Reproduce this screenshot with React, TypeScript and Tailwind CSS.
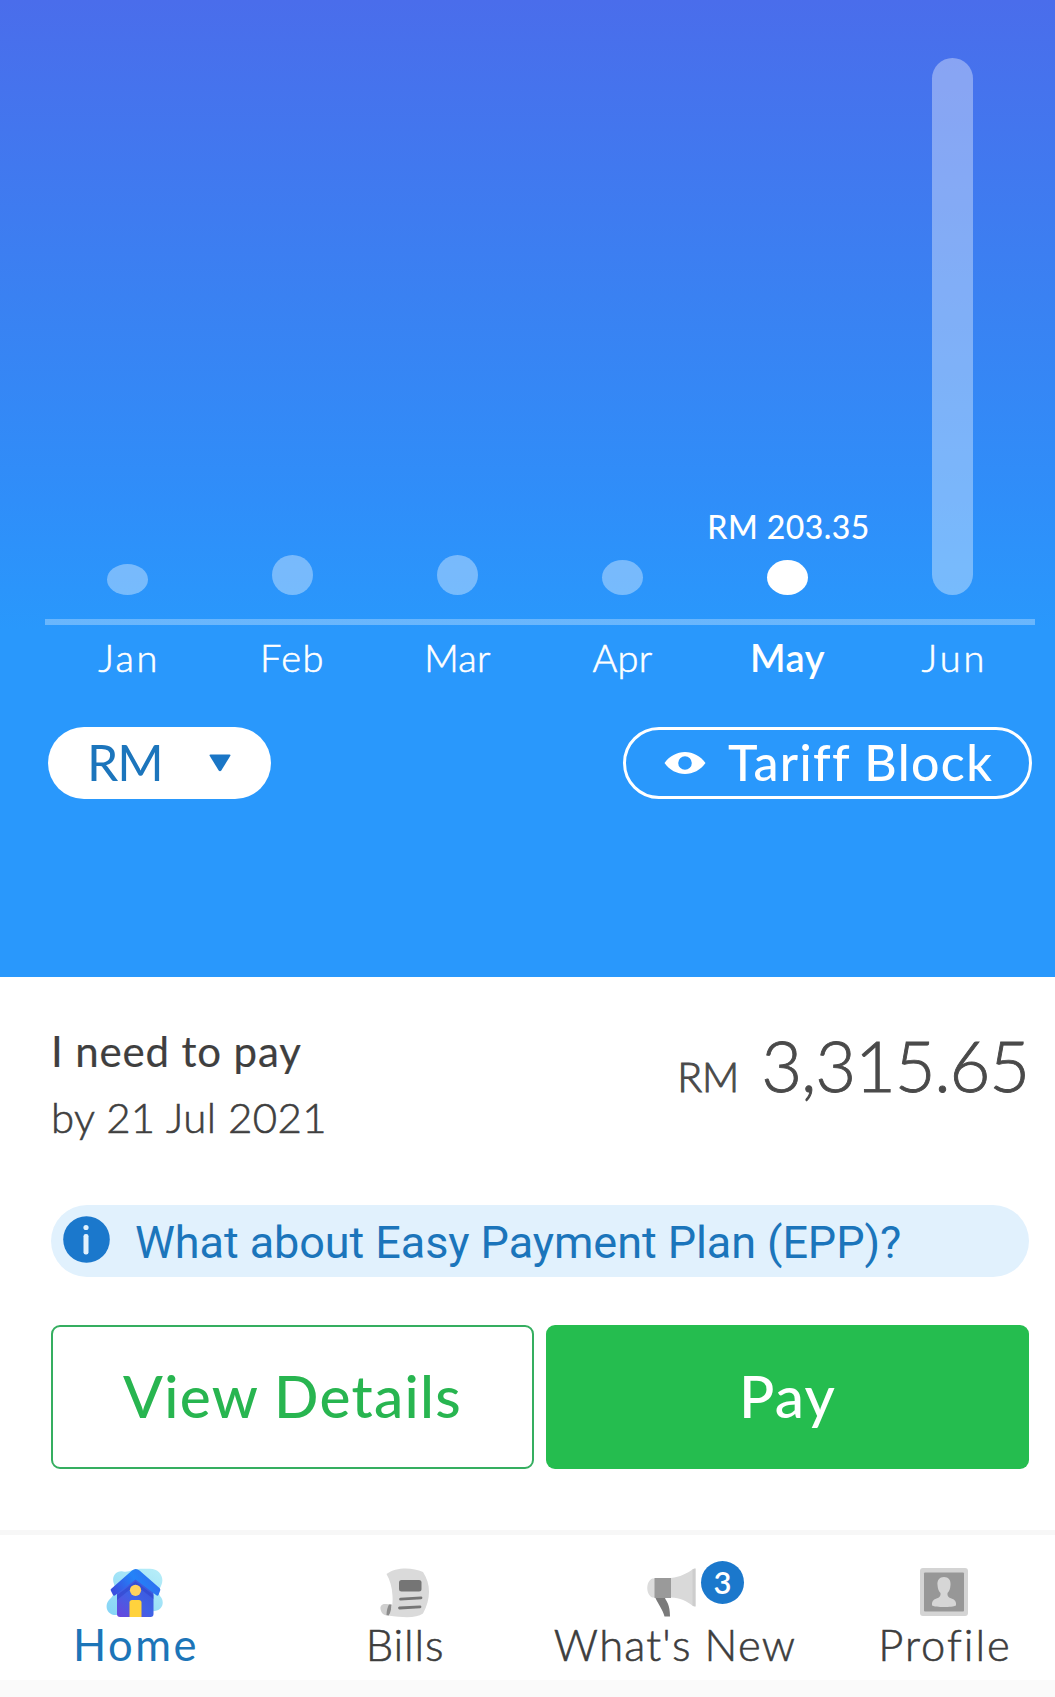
import type { ReactNode } from "react";

const usage = [
  { month: "Jan", height: 31, tracking: "pl-[3px] tracking-[2.5px]" },
  { month: "Feb", height: 40, tracking: "tracking-[1.5px]" },
  { month: "Mar", height: 40, tracking: "tracking-[0.3px]" },
  { month: "Apr", height: 35, tracking: "tracking-[0.3px]" },
  { month: "May", height: 35, tracking: "tracking-[0.5px]", amount: "RM 203.35" },
  { month: "Jun", height: 537, tracking: "pl-1 tracking-[3px]" },
];

// Light weight with a hair of stroke, used for all the thin labels
const thin = "font-light [-webkit-text-stroke:0.6px]";

function UsageChart() {
  return (
    <div className="ml-[45px] w-[990px]">
      {/* Bars */}
      <div className="grid h-[619px] grid-cols-6 pb-6">
        {usage.map((u) => (
          <div key={u.month} className="flex flex-col items-center justify-end">
            {u.amount && (
              <p className="mb-[13px] ml-[2px] text-[32px] leading-10 font-medium tracking-[0.45px] whitespace-nowrap text-white">
                {u.amount}
              </p>
            )}
            <div
              className={`w-[41px] ${u.height > 41 ? "rounded-full" : "rounded-[50%]"} ${
                u.amount ? "bg-white" : "bg-white/36"
              }`}
              style={{ height: u.height }}
            />
          </div>
        ))}
      </div>

      <div className="h-1.5 bg-white/30" />

      {/* Month labels */}
      <div className="grid grid-cols-6 text-center text-[38px] leading-[65px] text-white">
        {usage.map((u) => (
          <span key={u.month} className={`${u.tracking} ${u.amount ? "font-semibold" : thin}`}>
            {u.month}
          </span>
        ))}
      </div>
    </div>
  );
}

function EyeIcon() {
  return (
    <svg width="42" height="24" viewBox="0 0 42 24">
      <path
        fillRule="evenodd"
        fill="#fff"
        d="M0.500 12C5.500 5 13 1 21 1S36.500 5 41.500 12C36.500 19 29 23 21 23S5.500 19 0.500 12ZM21 5.200A6.800 6.800 0 1 0 21 18.800A6.800 6.800 0 1 0 21 5.200Z"
      />
    </svg>
  );
}

function HomeIcon() {
  return (
    <svg width="58" height="50" viewBox="0 0 58 50">
      <defs>
        <linearGradient id="roof" x1="0" y1="0.6" x2="1" y2="0.3">
          <stop offset="0" stopColor="#3a4fe0" />
          <stop offset="0.5" stopColor="#2383f8" />
          <stop offset="1" stopColor="#3268ee" />
        </linearGradient>
        <linearGradient id="wall" x1="0" y1="1" x2="0.8" y2="0">
          <stop offset="0" stopColor="#6a45dc" />
          <stop offset="0.5" stopColor="#3f62e6" />
          <stop offset="1" stopColor="#3b56dc" />
        </linearGradient>
        <linearGradient id="cloud" x1="0" y1="1" x2="0.8" y2="0">
          <stop offset="0" stopColor="#84d4f6" />
          <stop offset="1" stopColor="#b4ecf8" />
        </linearGradient>
      </defs>
      <path
        d="M8 16C5 9 10 2 17 3.500C24 4.500 26 1 34 0.800H44C54 1 59 10 55 18C53 22 52 25 54 28C59 33 57 42 49 43L10 47C1 47 -2 38 3 32C8 28 10 22 8 16Z"
        fill="url(#cloud)"
      />
      <path d="M11 23L29.500 9L47.500 23V46C47.500 48 46.500 49 44.500 49H14C12 49 11 48 11 46Z" fill="url(#wall)" />
      <path d="M11 27L29.500 13.500L47.500 27V31L29.500 17L11 32Z" fill="#2c3fc8" opacity="0.5" />
      <path
        d="M5 21L26 2.500C28.500 0.500 31 0.500 33.500 2.500L53.500 20C54.500 21 54.500 22 54 23L52.500 27C52 28 51 28 50 27L29.500 11.500L9.500 27C8.500 28 7.500 28 7 27L5 23C4.500 22 4.500 21.500 5 21Z"
        fill="url(#roof)"
      />
      <circle cx="29.500" cy="22.300" r="5.600" fill="#ffd25c" />
      <path d="M23.500 34.500C23.500 33 24.500 32 26 32H33C34.500 32 35.500 33 35.500 34.500V49H23.500Z" fill="#ffd23d" />
    </svg>
  );
}

function BillsIcon() {
  return (
    <svg width="50" height="50" viewBox="0 0 50 50">
      <path d="M6.500 6C16 -1 32 -1 43 4C51 16 51 31 43 45.500C36 50 26 50 8 47.500C12 42 13 36 12.500 28C12 19 10 12 6.500 6Z" fill="#dadada" />
      <path d="M0.500 41C0 37 3 35.500 6 36L11.500 36.500L9 47.500C4 48 1 45 0.500 41Z" fill="#cfcfcf" />
      <path d="M6.500 47C6.500 43 7.500 39 9 36.500H11.500C11.500 41 10.500 45 8.500 47.500Z" fill="#8b8b8b" />
      <rect x="19" y="12" width="22.500" height="11.500" rx="2.500" fill="#757575" />
      <path d="M20.500 31.200L41 29.800M19.500 40L40 38.800" stroke="#757575" strokeWidth="2.800" strokeLinecap="round" />
    </svg>
  );
}

function MegaphoneIcon() {
  return (
    <svg className="mr-1.5" width="50" height="50" viewBox="0 0 50 50">
      <path d="M8 10.500H5.500C-1.500 13 -1.500 27 5.500 29.500H8Z" fill="#dcdcdc" />
      <path d="M24 10C33 9 40 5.500 46 1L47.500 0.500H48.500V38.500H47L46 38C40 33 33 30 24 29.500Z" fill="#d9d9d9" />
      <path d="M45.500 1.500L48.500 0.500V38.500L45.500 37.500Z" fill="#cdcdcd" />
      <path d="M8.500 30H18C19.500 34 23 36 23 48.500H17.500C15.500 41 11 36 8.500 30Z" fill="#7a7a7a" />
      <rect x="7.500" y="10" width="16.500" height="20" fill="#9a9a9a" />
    </svg>
  );
}

function ProfileIcon() {
  return (
    <svg className="mr-0.5" width="48" height="48" viewBox="0 0 48 48">
      <rect width="48" height="48" rx="3" fill="#d4d4d4" />
      <rect x="4" y="4.500" width="40" height="39" rx="1" fill="#979797" />
      <path
        d="M24 9C28.500 9 31 12 30.500 17C30.300 21 29 23.500 27.500 25C27 28 28.500 29.500 31.500 30.500C35 31.500 36.500 34 36 37.500C32 39.500 16 39.500 12 37.500C11.500 34 13 31.500 16.500 30.500C19.500 29.500 21 28 20.500 25C19 23.500 17.700 21 17.500 17C17 12 19.500 9 24 9Z"
        fill="#d6d6d6"
      />
    </svg>
  );
}

type NavItemProps = { label: string; icon: ReactNode; badge?: string; className: string };

function NavItem({ label, icon, badge, className }: NavItemProps) {
  return (
    <a className="flex flex-col items-center pt-[33px]">
      <div className="relative flex h-[50px] items-start">
        {icon}
        {badge && (
          <span className="absolute -top-[7px] left-[54px] flex h-[43px] w-[43px] items-center justify-center rounded-full bg-[#1b78cc] text-[31px] leading-none font-semibold text-white">
            {badge}
          </span>
        )}
      </div>
      <span className={`text-[43.500px] leading-[52px] whitespace-nowrap ${className}`}>{label}</span>
    </a>
  );
}

export default function App() {
  return (
    <div className="h-[1697px] w-[1055px] overflow-hidden bg-white font-['Lato','Open_Sans',sans-serif]">
      <section className="h-[977px] bg-[linear-gradient(180deg,#4a6deb_0px,#3a81f2_295px,#2f8ef9_500px,#2998fc_630px)]">
        <UsageChart />

        <div className="mt-[37px] flex justify-between pr-[23px] pl-12">
          <button className="flex h-[72px] w-[223px] items-center rounded-full bg-white pl-[39px] text-[50px] leading-none tracking-[-1px] text-[#1c75bc]">
            <span className="w-[76px] pb-[3px] text-left">RM</span>
            <svg className="ml-[46px]" width="22" height="18" viewBox="0 0 22 18">
              <path d="M1.500 0.500H20.500Q22 0.500 21.200 2L12.300 16.500Q11 18 9.700 16.500L0.800 2Q0 0.500 1.500 0.500Z" fill="#1a76c6" />
            </svg>
          </button>

          <button className="flex h-[72px] w-[409px] items-center rounded-full border-[3px] border-white pl-[38px] text-[50px] leading-none font-medium tracking-[1.4px] whitespace-nowrap text-white">
            <EyeIcon />
            <span className="ml-[22px] pb-[3px]">Tariff Block</span>
          </button>
        </div>
      </section>

      <section className="h-[553px] pt-10 pr-[26px] pl-[51px]">
        <div className="flex h-[134px] justify-between">
          <div className="pt-px text-[42px] leading-[66px] text-[#3f3f3f]">
            <p className="tracking-[0.85px] [-webkit-text-stroke:0.2px]">I need to pay</p>
            <p className={`tracking-[0.35px] ${thin}`}>by 21 Jul 2021</p>
          </div>
          <p className="-mt-0.5 flex h-[100px] items-baseline leading-[100px] text-[#4a4a4a]">
            <span className="mr-[22px] text-[41px] font-light [-webkit-text-stroke:1px]">RM</span>
            <span className="text-[70.500px] font-light tracking-[-1.2px] [-webkit-text-stroke:0.9px]">3,315.65</span>
          </p>
        </div>

        <a className="mt-[54px] flex h-[72px] items-center rounded-full bg-[#e1f1fd] pl-3 text-[#1b75bb]">
          <svg className="-mt-[3px]" width="47" height="47" viewBox="0 0 47 47">
            <circle cx="23.500" cy="23.500" r="23.300" fill="#1b78cc" />
            <circle cx="23" cy="11.500" r="2.600" fill="#e1f1fd" />
            <rect x="20.500" y="18" width="5" height="20.500" rx="2.200" fill="#e1f1fd" />
          </svg>
          <span className="ml-[25px] pt-[3px] font-['Roboto',sans-serif] text-[45px] tracking-[-0.08px] whitespace-nowrap">
            What about Easy Payment Plan (EPP)?
          </span>
        </a>

        <div className="mt-12 grid h-36 grid-cols-2 gap-3 text-[58.500px] font-medium tracking-[1.3px]">
          <button className="rounded-[9px] border-2 border-[#35ae60] pb-[3px] text-[#28b550]">View Details</button>
          <button className="rounded-[9px] bg-[#25bd4f] pb-[3px] text-white">Pay</button>
        </div>
      </section>

      <div className="h-[5px] bg-[#f7f7f7]" />

      <nav className="grid h-[145px] w-[1080px] grid-cols-4 text-[#3d3d3d]">
        <NavItem label="Home" icon={<HomeIcon />} className="pl-0.5 tracking-[2.5px] text-[#1c75b8]" />
        <NavItem label="Bills" icon={<BillsIcon />} className={`tracking-[0.8px] ${thin}`} />
        <NavItem label="What's New" icon={<MegaphoneIcon />} badge="3" className={`tracking-[1.2px] ${thin}`} />
        <NavItem label="Profile" icon={<ProfileIcon />} className={`tracking-[2px] ${thin}`} />
      </nav>
      <div className="h-[17px] bg-[#fafafa]" />
    </div>
  );
}
